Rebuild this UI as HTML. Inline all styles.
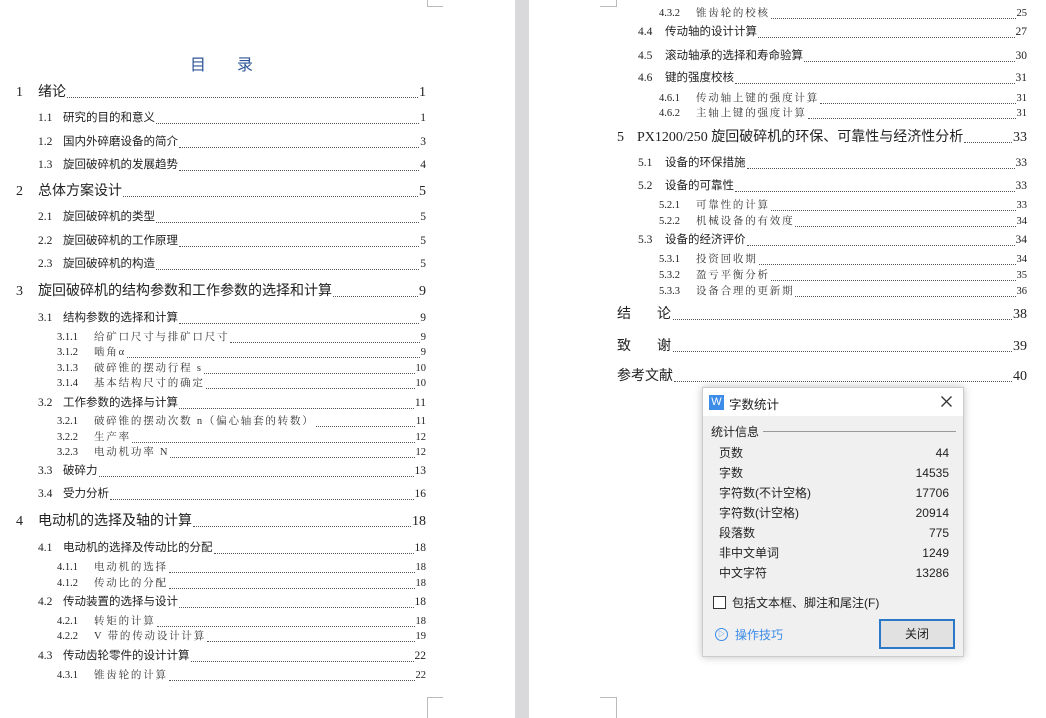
<!DOCTYPE html>
<html><head><meta charset="utf-8"><style>
*{margin:0;padding:0;box-sizing:border-box}
body{width:1046px;height:718px;background:#fff;position:relative;overflow:hidden;font-family:"Liberation Serif","Noto Sans CJK SC",serif;color:#222}
.gap{position:absolute;left:515px;top:0;width:14px;height:718px;background:#d9d9db}
.l{position:absolute;display:flex;align-items:baseline;height:17px;line-height:17px;white-space:nowrap}
.l i{flex:1;border-bottom:1px dotted #555;margin:0 1px 0 1px;height:1px;align-self:flex-end;margin-bottom:3px}
.l .t{font-family:"Liberation Serif","Noto Sans CJK SC",sans-serif}
.a{font-size:14px}.a .n{width:22px}
.b{font-size:11.5px}.b .n{width:25px}
.c{font-size:10.5px}.c .n{width:37px}.c .t{font-family:"Liberation Serif","Noto Serif CJK SC",serif;letter-spacing:1.8px;color:#333}
.L{right:620px}.R{right:19px}
.mk{position:absolute;border-color:#bbb;border-style:solid;border-width:0}
.dlg{position:absolute;left:702px;top:387px;width:262px;height:270px;background:#f0f0f0;border:1px solid #ccc;box-shadow:0 0 8px rgba(0,0,0,.25);font-family:"Liberation Sans","Noto Sans CJK SC",sans-serif;font-size:12px;color:#222}
.tb{height:28px;background:#fff;position:relative}
.row{position:absolute;left:16px;width:230px;display:flex;justify-content:space-between;align-items:baseline;line-height:16px}
</style></head><body>
<div class="gap"></div>
<div class="mk" style="left:427px;top:0;width:16px;height:7px;border-left-width:1px;border-bottom-width:1px"></div>
<div class="mk" style="left:600px;top:0;width:17px;height:7px;border-right-width:1px;border-bottom-width:1px"></div>
<div class="mk" style="left:427px;top:697px;width:16px;height:21px;border-left-width:1px;border-top-width:1px"></div>
<div class="mk" style="left:600px;top:697px;width:17px;height:21px;border-right-width:1px;border-top-width:1px"></div>
<div style="position:absolute;left:190px;top:51px;font-size:16px;color:#2e5597;font-family:'Noto Sans CJK SC',sans-serif;letter-spacing:31px">目录</div>

<div class="l a L" style="left:16px;top:84px"><span class="n">1</span><span class="t">绪论</span><i></i><span>1</span></div>
<div class="l b L" style="left:38px;top:110px"><span class="n">1.1</span><span class="t">研究的目的和意义</span><i></i><span>1</span></div>
<div class="l b L" style="left:38px;top:134px"><span class="n">1.2</span><span class="t">国内外碎磨设备的简介</span><i></i><span>3</span></div>
<div class="l b L" style="left:38px;top:157px"><span class="n">1.3</span><span class="t">旋回破碎机的发展趋势</span><i></i><span>4</span></div>
<div class="l a L" style="left:16px;top:183px"><span class="n">2</span><span class="t">总体方案设计</span><i></i><span>5</span></div>
<div class="l b L" style="left:38px;top:209px"><span class="n">2.1</span><span class="t">旋回破碎机的类型</span><i></i><span>5</span></div>
<div class="l b L" style="left:38px;top:233px"><span class="n">2.2</span><span class="t">旋回破碎机的工作原理</span><i></i><span>5</span></div>
<div class="l b L" style="left:38px;top:256px"><span class="n">2.3</span><span class="t">旋回破碎机的构造</span><i></i><span>5</span></div>
<div class="l a L" style="left:16px;top:283px"><span class="n">3</span><span class="t">旋回破碎机的结构参数和工作参数的选择和计算</span><i></i><span>9</span></div>
<div class="l b L" style="left:38px;top:310px"><span class="n">3.1</span><span class="t">结构参数的选择和计算</span><i></i><span>9</span></div>
<div class="l c L" style="left:57px;top:329px"><span class="n">3.1.1</span><span class="t">给矿口尺寸与排矿口尺寸</span><i></i><span>9</span></div>
<div class="l c L" style="left:57px;top:344px"><span class="n">3.1.2</span><span class="t">啮角α</span><i></i><span>9</span></div>
<div class="l c L" style="left:57px;top:360px"><span class="n">3.1.3</span><span class="t">破碎锥的摆动行程 s</span><i></i><span>10</span></div>
<div class="l c L" style="left:57px;top:375px"><span class="n">3.1.4</span><span class="t">基本结构尺寸的确定</span><i></i><span>10</span></div>
<div class="l b L" style="left:38px;top:395px"><span class="n">3.2</span><span class="t">工作参数的选择与计算</span><i></i><span>11</span></div>
<div class="l c L" style="left:57px;top:413px"><span class="n">3.2.1</span><span class="t">破碎锥的摆动次数 n（偏心轴套的转数）</span><i></i><span>11</span></div>
<div class="l c L" style="left:57px;top:429px"><span class="n">3.2.2</span><span class="t">生产率</span><i></i><span>12</span></div>
<div class="l c L" style="left:57px;top:444px"><span class="n">3.2.3</span><span class="t">电动机功率 N</span><i></i><span>12</span></div>
<div class="l b L" style="left:38px;top:463px"><span class="n">3.3</span><span class="t">破碎力</span><i></i><span>13</span></div>
<div class="l b L" style="left:38px;top:486px"><span class="n">3.4</span><span class="t">受力分析</span><i></i><span>16</span></div>
<div class="l a L" style="left:16px;top:513px"><span class="n">4</span><span class="t">电动机的选择及轴的计算</span><i></i><span>18</span></div>
<div class="l b L" style="left:38px;top:540px"><span class="n">4.1</span><span class="t">电动机的选择及传动比的分配</span><i></i><span>18</span></div>
<div class="l c L" style="left:57px;top:559px"><span class="n">4.1.1</span><span class="t">电动机的选择</span><i></i><span>18</span></div>
<div class="l c L" style="left:57px;top:575px"><span class="n">4.1.2</span><span class="t">传动比的分配</span><i></i><span>18</span></div>
<div class="l b L" style="left:38px;top:594px"><span class="n">4.2</span><span class="t">传动装置的选择与设计</span><i></i><span>18</span></div>
<div class="l c L" style="left:57px;top:613px"><span class="n">4.2.1</span><span class="t">转矩的计算</span><i></i><span>18</span></div>
<div class="l c L" style="left:57px;top:628px"><span class="n">4.2.2</span><span class="t">V 带的传动设计计算</span><i></i><span>19</span></div>
<div class="l b L" style="left:38px;top:648px"><span class="n">4.3</span><span class="t">传动齿轮零件的设计计算</span><i></i><span>22</span></div>
<div class="l c L" style="left:57px;top:667px"><span class="n">4.3.1</span><span class="t">锥齿轮的计算</span><i></i><span>22</span></div>

<div class="l c R" style="left:659px;top:5px"><span class="n">4.3.2</span><span class="t">锥齿轮的校核</span><i></i><span>25</span></div>
<div class="l b R" style="left:638px;top:24px"><span class="n" style="width:27px">4.4</span><span class="t">传动轴的设计计算</span><i></i><span>27</span></div>
<div class="l b R" style="left:638px;top:48px"><span class="n" style="width:27px">4.5</span><span class="t">滚动轴承的选择和寿命验算</span><i></i><span>30</span></div>
<div class="l b R" style="left:638px;top:70px"><span class="n" style="width:27px">4.6</span><span class="t">键的强度校核</span><i></i><span>31</span></div>
<div class="l c R" style="left:659px;top:90px"><span class="n">4.6.1</span><span class="t">传动轴上键的强度计算</span><i></i><span>31</span></div>
<div class="l c R" style="left:659px;top:105px"><span class="n">4.6.2</span><span class="t">主轴上键的强度计算</span><i></i><span>31</span></div>
<div class="l a R" style="left:617px;top:129px"><span class="n" style="width:20px">5</span><span class="t">PX1200/250 旋回破碎机的环保、可靠性与经济性分析</span><i></i><span>33</span></div>
<div class="l b R" style="left:638px;top:155px"><span class="n" style="width:27px">5.1</span><span class="t">设备的环保措施</span><i></i><span>33</span></div>
<div class="l b R" style="left:638px;top:178px"><span class="n" style="width:27px">5.2</span><span class="t">设备的可靠性</span><i></i><span>33</span></div>
<div class="l c R" style="left:659px;top:197px"><span class="n">5.2.1</span><span class="t">可靠性的计算</span><i></i><span>33</span></div>
<div class="l c R" style="left:659px;top:213px"><span class="n">5.2.2</span><span class="t">机械设备的有效度</span><i></i><span>34</span></div>
<div class="l b R" style="left:638px;top:232px"><span class="n" style="width:27px">5.3</span><span class="t">设备的经济评价</span><i></i><span>34</span></div>
<div class="l c R" style="left:659px;top:251px"><span class="n">5.3.1</span><span class="t">投资回收期</span><i></i><span>34</span></div>
<div class="l c R" style="left:659px;top:267px"><span class="n">5.3.2</span><span class="t">盈亏平衡分析</span><i></i><span>35</span></div>
<div class="l c R" style="left:659px;top:283px"><span class="n">5.3.3</span><span class="t">设备合理的更新期</span><i></i><span>36</span></div>
<div class="l a R" style="left:617px;top:306px"><span class="t" style="letter-spacing:26px">结论</span><i style="margin-left:-24px"></i><span>38</span></div>
<div class="l a R" style="left:617px;top:338px"><span class="t" style="letter-spacing:26px">致谢</span><i style="margin-left:-24px"></i><span>39</span></div>
<div class="l a R" style="left:617px;top:368px"><span class="t">参考文献</span><i></i><span>40</span></div>

<div class="dlg">
 <div class="tb">
  <div style="position:absolute;left:6px;top:7px;width:15px;height:15px;background:#3c8ce8;color:#fff;font-size:11px;line-height:15px;text-align:center">W</div>
  <div style="position:absolute;left:26px;top:6px;font-size:12.5px">字数统计</div>
  <svg style="position:absolute;left:238px;top:8px" width="11" height="11"><path d="M0.5 0.5L10.5 10.5M10.5 0.5L0.5 10.5" stroke="#333" stroke-width="1.3"/></svg>
 </div>
 <div style="position:absolute;left:8px;top:35px">统计信息</div>
 <div style="position:absolute;left:60px;top:43px;width:193px;border-top:1px solid #999"></div>
 <div class="row" style="top:57px"><span>页数</span><span>44</span></div>
 <div class="row" style="top:77px"><span>字数</span><span>14535</span></div>
 <div class="row" style="top:97px"><span>字符数(不计空格)</span><span>17706</span></div>
 <div class="row" style="top:117px"><span>字符数(计空格)</span><span>20914</span></div>
 <div class="row" style="top:137px"><span>段落数</span><span>775</span></div>
 <div class="row" style="top:157px"><span>非中文单词</span><span>1249</span></div>
 <div class="row" style="top:177px"><span>中文字符</span><span>13286</span></div>
 <div style="position:absolute;left:10px;top:208px;width:13px;height:13px;border:1px solid #333;background:#fff"></div>
 <div style="position:absolute;left:29px;top:206px">包括文本框、脚注和尾注(F)</div>
 <div style="position:absolute;left:12px;top:240px;width:13px;height:13px;border:1px solid #3c8ce8;border-radius:50%;color:#3c8ce8;font-size:7px;line-height:11px;text-align:center">▷</div>
 <div style="position:absolute;left:32px;top:238px;color:#3c8ce8">操作技巧</div>
 <div style="position:absolute;left:176px;top:231px;width:76px;height:30px;border:2px solid #2a78c8;background:#e1e1e1;text-align:center;line-height:26px">关闭</div>
</div>
</body></html>
